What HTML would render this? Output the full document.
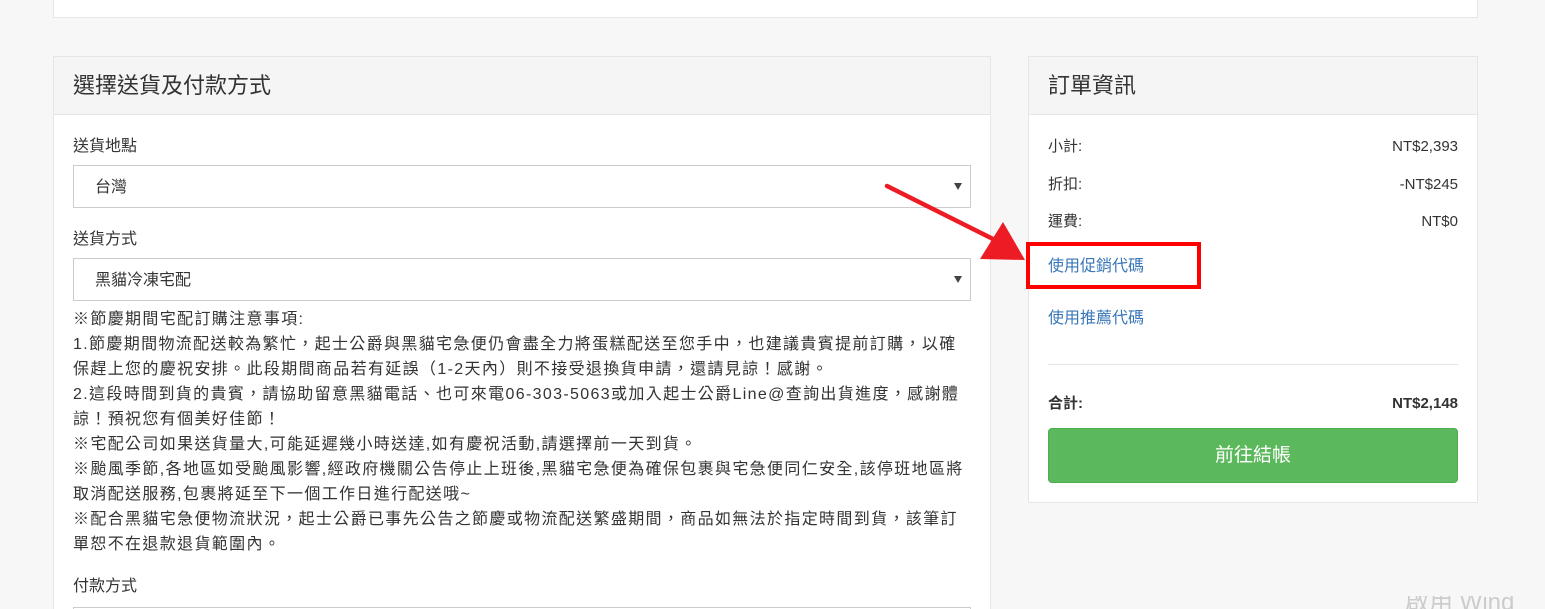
<!DOCTYPE html>
<html><head><meta charset="utf-8"><style>
html,body{margin:0;width:1545px;height:609px;overflow:hidden}
body{background:#f7f7f8;font-family:"Liberation Sans","Noto Sans CJK TC",sans-serif;color:#333;position:relative}
.a{position:absolute}
.panel{background:#fff;border:1px solid #e6e6e6;box-sizing:border-box}
.hd{background:#f5f5f5;border-bottom:1px solid #e6e6e6;font-size:22px;padding-left:19px;line-height:58px;height:58px;box-sizing:border-box}
.sel{border:1px solid #ccc;height:43px;box-sizing:border-box;font-size:16px;line-height:43px;padding-left:21px;position:absolute;left:19px;width:898px}
.sel:after{content:"";position:absolute;right:8px;top:17px;border:4px solid transparent;border-top:7px solid #444;border-bottom:0}
.lbl{font-size:16px;position:absolute;left:19px;line-height:24px}
.note{position:absolute;left:19px;top:250px;width:900px;font-size:16px;line-height:25px;white-space:nowrap;letter-spacing:1.35px}
.row{position:absolute;left:19px;right:19px;font-size:15px;line-height:20px}
.row span{float:right}
.lnk{color:#3a77b8;font-size:16px;position:absolute;left:19px;line-height:24px}
</style></head><body>
<div class="a panel" style="left:53px;top:-2px;width:1425px;height:20px"></div>
<div class="a panel" style="left:53px;top:56px;width:938px;height:553px;overflow:hidden;border-bottom:0">
<div class="hd">選擇送貨及付款方式</div>
<div class="lbl" style="top:78px">送貨地點</div>
<div class="sel" style="top:108px">台灣</div>
<div class="lbl" style="top:171px">送貨方式</div>
<div class="sel" style="top:201px">黑貓冷凍宅配</div>
<div class="note">※節慶期間宅配訂購注意事項:<br>1.節慶期間物流配送較為繁忙，起士公爵與黑貓宅急便仍會盡全力將蛋糕配送至您手中，也建議貴賓提前訂購，以確<br>保趕上您的慶祝安排。此段期間商品若有延誤（1-2天內）則不接受退換貨申請，還請見諒！感謝。<br>2.這段時間到貨的貴賓，請協助留意黑貓電話、也可來電06-303-5063或加入起士公爵Line@查詢出貨進度，感謝體<br>諒！預祝您有個美好佳節！<br>※宅配公司如果送貨量大,可能延遲幾小時送達,如有慶祝活動,請選擇前一天到貨。<br>※颱風季節,各地區如受颱風影響,經政府機關公告停止上班後,黑貓宅急便為確保包裹與宅急便同仁安全,該停班地區將<br>取消配送服務,包裹將延至下一個工作日進行配送哦~<br>※配合黑貓宅急便物流狀況，起士公爵已事先公告之節慶或物流配送繁盛期間，商品如無法於指定時間到貨，該筆訂<br>單恕不在退款退貨範圍內。</div>
<div class="lbl" style="top:518px">付款方式</div>
<div class="sel" style="top:550px"></div>
</div>
<div class="a panel" style="left:1028px;top:56px;width:450px;height:447px">
<div class="hd">訂單資訊</div>
<div class="row" style="top:80px">小計:<span>NT$2,393</span></div>
<div class="row" style="top:118px">折扣:<span>-NT$245</span></div>
<div class="row" style="top:155px">運費:<span>NT$0</span></div>
<div class="lnk" style="top:198px">使用促銷代碼</div>
<div class="lnk" style="top:250px">使用推薦代碼</div>
<div class="a" style="left:19px;right:19px;top:307px;border-top:1px solid #e6e6e6"></div>
<div class="row" style="top:337px;font-weight:bold">合計:<span>NT$2,148</span></div>
<div class="a" style="left:19px;right:19px;top:371px;height:55px;background:#5cb85c;border:1px solid #4cae4c;border-radius:4px;box-sizing:border-box;color:#fff;font-size:19px;text-align:center;line-height:53px">前往結帳</div>
</div>
<div class="a" style="left:1026px;top:242px;width:175px;height:47px;border:4px solid #f00;box-sizing:border-box"></div>
<svg class="a" style="left:0;top:0" width="1545" height="609"><line x1="887" y1="186" x2="995" y2="240" stroke="#ed1c24" stroke-width="4.5" stroke-linecap="round"/><polygon points="1003,222 980,259 1025,260" fill="#ed1c24"/></svg>
<div class="a" style="left:1405px;top:596px;font-size:24px;color:#ccc;line-height:13px;height:13px;overflow:hidden">啟用 Wind</div>
</body></html>
